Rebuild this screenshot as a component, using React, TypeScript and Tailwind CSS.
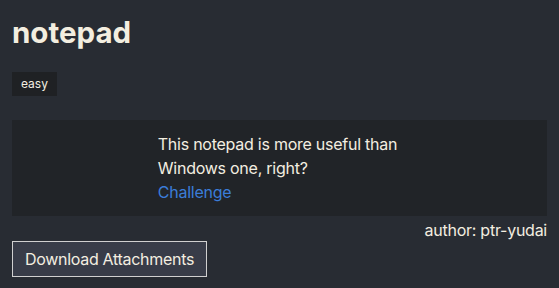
import React from "react";

const App: React.FC = () => {
  return (
    <div className="w-[559px] h-[288px] bg-[#282c33] px-3 pt-[13px] font-['Inter',sans-serif] text-[#f3eee0] overflow-hidden">
      <h1 className="font-bold text-[29.5px] leading-[38px]">notepad</h1>
      <div className="mt-[21px] flex">
        <span className="bg-[#1f2124] text-[12px] leading-[24px] px-[9px]">easy</span>
      </div>
      <div className="mt-6 bg-[#212428] h-[96px] flex justify-center pt-3 tracking-[-0.25px]">
        <div className="text-[16px] leading-[24px] mr-[4px]">
          <p>This notepad is more useful than</p>
          <p>Windows one, right?</p>
          <a href="#" className="text-[#3b7dd8]">
            Challenge
          </a>
        </div>
      </div>
      <p className="text-right text-[16px] leading-[24px] mt-[2px] tracking-[-0.25px]">author: ptr-yudai</p>
      <button className="mt-[-1px] border border-[#d0d0d0] bg-[#383c48] text-[16px] leading-[24px] px-3 py-[5px] h-[36px] tracking-[-0.3px]">
        Download Attachments
      </button>
    </div>
  );
};

export default App;
